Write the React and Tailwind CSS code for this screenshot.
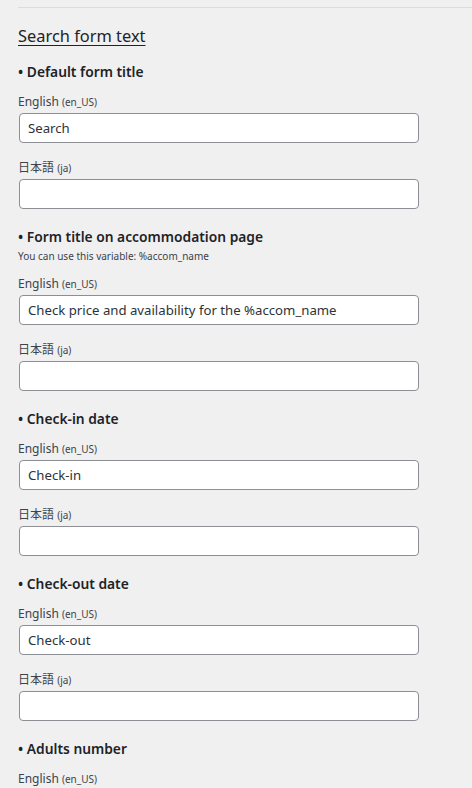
import React from "react";

const SECTIONS = [
  { title: "Default form title", en: "Search" },
  {
    title: "Form title on accommodation page",
    note: "You can use this variable: %accom_name",
    en: "Check price and availability for the %accom_name",
  },
  { title: "Check-in date", en: "Check-in" },
  { title: "Check-out date", en: "Check-out" },
];

function Field({ lang, code, value, first }) {
  return (
    <div className={first ? "mt-[11px]" : "mt-[16px]"}>
      <div className="h-[18px] leading-[18px] text-[12px] text-[#3c434a]">
        {lang} <span className="text-[10px]">({code})</span>
      </div>
      <input
        type="text"
        defaultValue={value}
        className="mt-[2px] ml-px block w-[400px] h-[30px] px-[8px] bg-white border border-[#8c8f94] rounded-[4px] text-[13.2px] text-[#2c3338] outline-none"
      />
    </div>
  );
}

function Section({ title, note, en, last }) {
  return (
    <div className="mt-[18px]">
      <div className="h-[20px] leading-[20px] text-[13.8px] font-semibold text-[#1d2327]">
        • {title}
      </div>
      {note && (
        <div className="h-[16px] leading-[16px] text-[10px] text-[#3c434a] mt-[1px]">{note}</div>
      )}
      <Field lang="English" code="en_US" value={en} first />
      {!last && <Field lang="日本語" code="ja" value="" />}
    </div>
  );
}

export default function App() {
  return (
    <div
      className="min-h-screen bg-[#f0f0f1] pl-[18px] overflow-hidden"
      style={{ fontFamily: '"Noto Sans", "Noto Sans CJK JP", sans-serif' }}
    >
      <div className="pt-[7px]">
        <div className="h-px bg-[#dcdcde]" />
      </div>
      <h2 className="mt-[15px] h-[26px] leading-[26px] text-[16.4px] text-[#1d2327] underline underline-offset-[3px]">
        Search form text
      </h2>
      <div className="mt-[-5px]">
        {SECTIONS.map((s) => (
          <Section key={s.title} {...s} />
        ))}
        <Section title="Adults number" en="" last />
      </div>
    </div>
  );
}
